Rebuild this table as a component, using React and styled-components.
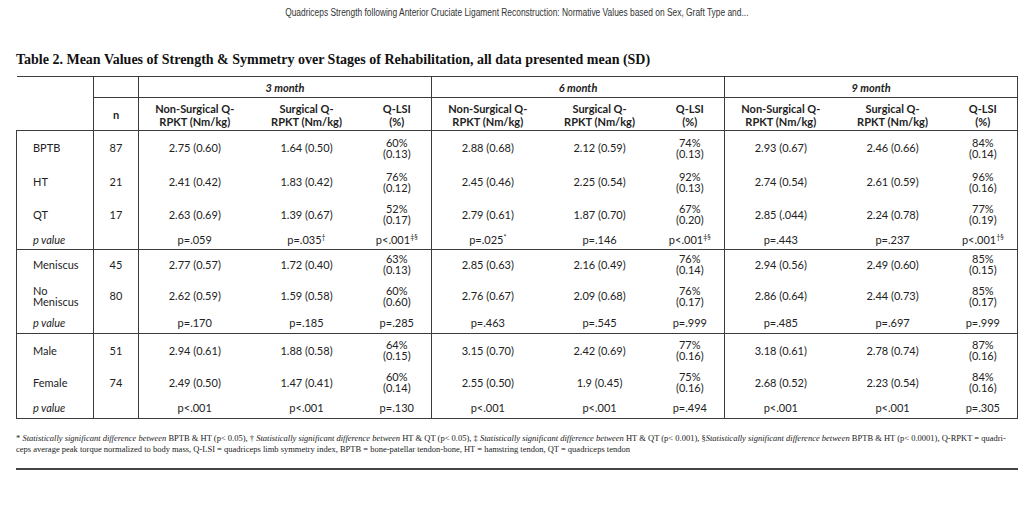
import React from 'react';
import styled, { createGlobalStyle, css } from 'styled-components';

const Global = createGlobalStyle`
  html, body { margin: 0; padding: 0; background: #fff; }
  body { font-family: Lato, "Open Sans", sans-serif; color: #222; }
`;

const LINE = '1px solid #3c3c3c';

const Page = styled.div`
  width: 1024px;
  height: 506px;
  box-sizing: border-box;
  padding: 0 6px 0 16px;
  display: flex;
  flex-direction: column;
  overflow: hidden;
`;

const RunningHead = styled.div`
  display: flex;
  justify-content: center;
  padding-top: 7px;
  height: 12px;
`;

const RunningText = styled.span`
  display: inline-block;
  font-family: "Liberation Sans", Arial, sans-serif;
  font-size: 10px;
  line-height: 12px;
  color: #333;
  white-space: nowrap;
  transform: scaleX(0.84);
  transform-origin: center;
`;

const Title = styled.h2`
  margin: 33px 0 8px 0;
  font-family: "Liberation Serif", "Times New Roman", serif;
  font-weight: bold;
  font-size: 14px;
  line-height: 16px;
  color: #111;
`;

const Table = styled.table`
  border-collapse: collapse;
  table-layout: fixed;
  width: 1002px;
  font-size: 11px;
  border: ${LINE};
`;

const Group = styled.tbody`
  border-top: ${LINE};
`;

const Row = styled.tr`
  height: ${(p) => p.$h}px;
`;

const cellBase = css`
  padding: 0 4px;
  vertical-align: middle;
  text-align: center;
  ${(p) => p.$left && `border-left: ${LINE};`}
`;

const GroupHead = styled.th`
  ${cellBase}
  font-weight: 700;
  font-style: italic;
  font-size: 11px;
  line-height: 13px;
  border-bottom: ${LINE};
`;

const Corner = styled.th`
  ${cellBase}
  border-left: hidden;
  border-bottom: ${LINE};
`;

const ColHead = styled.th`
  ${cellBase}
  font-weight: 700;
  font-size: 11px;
  line-height: 13px;
  white-space: pre-line;
  padding-top: 1px;
`;

const Label = styled.td`
  padding: 0 4px 0 16px;
  text-align: left;
  vertical-align: middle;
  line-height: 11px;
  font-style: ${(p) => (p.$italic ? 'italic' : 'normal')};
  white-space: pre-line;
`;

const Cell = styled.td`
  ${cellBase}
  line-height: 11px;
  white-space: pre-line;
`;

const Sup = styled.sup`
  font-size: 7px;
  line-height: 0;
  vertical-align: 4px;
`;

const Notes = styled.p`
  margin: 14px 0 0 0;
  font-family: "Liberation Serif", "Times New Roman", serif;
  font-size: 8.5px;
  line-height: 11px;
  color: #222;
  white-space: nowrap;
`;

const Em = styled.em`
  font-style: italic;
`;

const Rule = styled.hr`
  margin: 13px 0 0 0;
  border: 0;
  border-top: 2px solid #444;
  width: 1002px;
`;

const groups = [
  [
    { label: 'BPTB', n: '87', h: 34, cells: ['2.75 (0.60)', '1.64 (0.50)', '60%\n(0.13)', '2.88 (0.68)', '2.12 (0.59)', '74%\n(0.13)', '2.93 (0.67)', '2.46 (0.66)', '84%\n(0.14)'] },
    { label: 'HT', n: '21', h: 34, cells: ['2.41 (0.42)', '1.83 (0.42)', '76%\n(0.12)', '2.45 (0.46)', '2.25 (0.54)', '92%\n(0.13)', '2.74 (0.54)', '2.61 (0.59)', '96%\n(0.16)'] },
    { label: 'QT', n: '17', h: 31, cells: ['2.63 (0.69)', '1.39 (0.67)', '52%\n(0.17)', '2.79 (0.61)', '1.87 (0.70)', '67%\n(0.20)', '2.85 (.044)', '2.24 (0.78)', '77%\n(0.19)'] },
    { label: 'p value', p: true, n: '', h: 20, cells: ['p=.059', 'p=.035^†', 'p<.001^‡§', 'p=.025^*', 'p=.146', 'p<.001^‡§', 'p=.443', 'p=.237', 'p<.001^†§'] },
  ],
  [
    { label: 'Meniscus', n: '45', h: 29, cells: ['2.77 (0.57)', '1.72 (0.40)', '63%\n(0.13)', '2.85 (0.63)', '2.16 (0.49)', '76%\n(0.14)', '2.94 (0.56)', '2.49 (0.60)', '85%\n(0.15)'] },
    { label: 'No\nMeniscus', n: '80', h: 34, cells: ['2.62 (0.59)', '1.59 (0.58)', '60%\n(0.60)', '2.76 (0.67)', '2.09 (0.68)', '76%\n(0.17)', '2.86 (0.64)', '2.44 (0.73)', '85%\n(0.17)'] },
    { label: 'p value', p: true, n: '', h: 21, cells: ['p=.170', 'p=.185', 'p=.285', 'p=.463', 'p=.545', 'p=.999', 'p=.485', 'p=.697', 'p=.999'] },
  ],
  [
    { label: 'Male', n: '51', h: 33, cells: ['2.94 (0.61)', '1.88 (0.58)', '64%\n(0.15)', '3.15 (0.70)', '2.42 (0.69)', '77%\n(0.16)', '3.18 (0.61)', '2.78 (0.74)', '87%\n(0.16)'] },
    { label: 'Female', n: '74', h: 31, cells: ['2.49 (0.50)', '1.47 (0.41)', '60%\n(0.14)', '2.55 (0.50)', '1.9 (0.45)', '75%\n(0.16)', '2.68 (0.52)', '2.23 (0.54)', '84%\n(0.16)'] },
    { label: 'p value', p: true, n: '', h: 21, cells: ['p<.001', 'p<.001', 'p=.130', 'p<.001', 'p<.001', 'p=.494', 'p<.001', 'p<.001', 'p=.305'] },
  ],
];

const periods = ['3 month', '6 month', '9 month'];
const subHeads = ['Non-Surgical Q-\nRPKT (Nm/kg)', 'Surgical Q-\nRPKT (Nm/kg)', 'Q-LSI\n(%)'];
const colWidths = [77, 45, 112, 112, 69, 112, 112, 69, 112, 112, 69];

function Value({ text }) {
  const [main, sup] = text.split('^');
  return (
    <>
      {main}
      {sup && <Sup>{sup}</Sup>}
    </>
  );
}

export default function App() {
  return (
    <Page>
      <Global />
      <RunningHead>
        <RunningText>
          Quadriceps Strength following Anterior Cruciate Ligament Reconstruction: Normative Values based on Sex, Graft Type and...
        </RunningText>
      </RunningHead>
      <Title>
        Table 2. Mean Values of Strength &amp; Symmetry over Stages of Rehabilitation, all data presented mean (SD)
      </Title>
      <Table>
        <colgroup>
          {colWidths.map((w, i) => (
            <col key={i} style={{ width: w }} />
          ))}
        </colgroup>
        <thead>
          <Row $h={21}>
            <Corner rowSpan={2} />
            <GroupHead $left />
            {periods.map((p) => (
              <GroupHead key={p} colSpan={3} $left>
                {p}
              </GroupHead>
            ))}
          </Row>
          <Row $h={33}>
            <ColHead $left>n</ColHead>
            {periods.map((p) =>
              subHeads.map((s, i) => (
                <ColHead key={p + i} $left={i === 0}>
                  {s}
                </ColHead>
              ))
            )}
          </Row>
        </thead>
        {groups.map((rows, gi) => (
          <Group key={gi}>
            {rows.map((r) => (
              <Row key={r.label} $h={r.h}>
                <Label $italic={r.p}>{r.label}</Label>
                <Cell $left>{r.n}</Cell>
                {r.cells.map((c, ci) => (
                  <Cell key={ci} $left={ci % 3 === 0}>
                    <Value text={c} />
                  </Cell>
                ))}
              </Row>
            ))}
          </Group>
        ))}
      </Table>
      <Notes>
        * <Em>Statistically significant difference between</Em> BPTB &amp; HT (p&lt; 0.05), † <Em>Statistically significant difference between</Em> HT &amp; QT (p&lt; 0.05), ‡ <Em>Statistically significant difference between</Em> HT &amp; QT (p&lt; 0.001), §<Em>Statistically significant difference between</Em> BPTB &amp; HT (p&lt; 0.0001), Q-RPKT = quadri-
        <br />
        ceps average peak torque normalized to body mass, Q-LSI = quadriceps limb symmetry index, BPTB = bone-patellar tendon-bone, HT = hamstring tendon, QT = quadriceps tendon
      </Notes>
      <Rule />
    </Page>
  );
}
